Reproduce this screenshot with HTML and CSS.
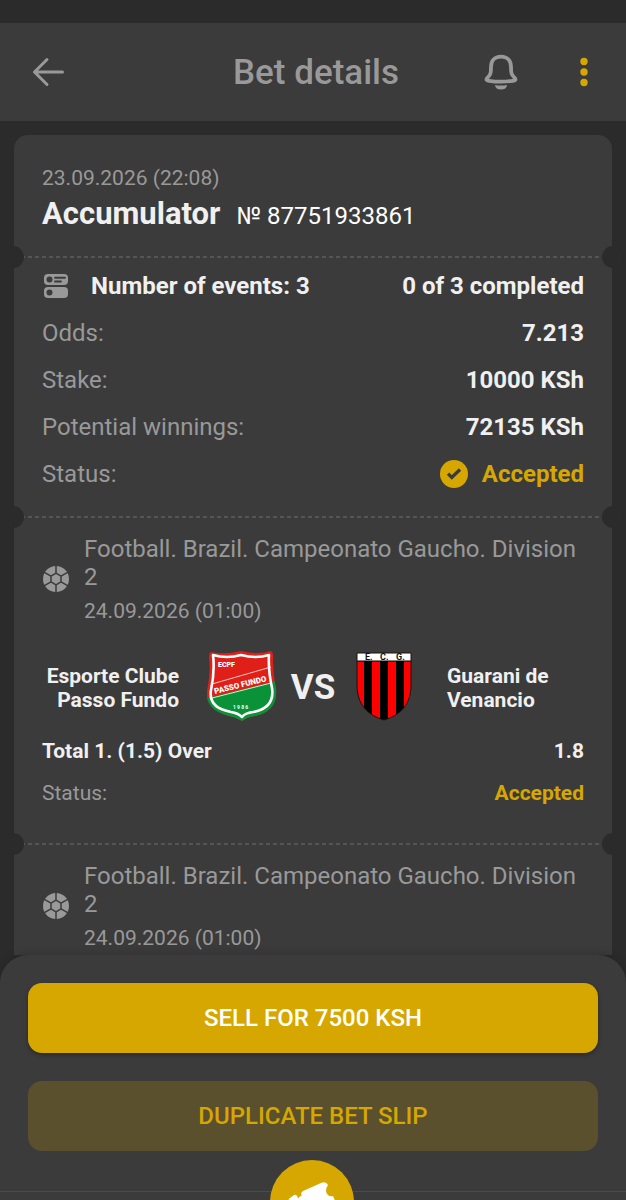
FILE: index.html
```
<!DOCTYPE html>
<html lang="en">
<head>
    <meta charset="UTF-8">
    <meta name="viewport" content="width=device-width, initial-scale=1.0">
    <title>Bet details</title>
    <link rel="stylesheet" href="styles.css">
</head>
<body>
    <!-- shared icons -->
    <svg class="sprite" aria-hidden="true">
        <symbol id="ball" viewBox="0 0 28 28">
            <circle cx="14" cy="14" r="13" fill="#999999"/>
            <path d="M14 8.2 L19 11.1 V16.9 L14 19.8 L9 16.9 V11.1 Z M14 8.2 V0 M14 19.8 V28 M19 11.1 L26.5 6.8 M19 16.9 L26.5 21.2 M9 11.1 L1.5 6.8 M9 16.9 L1.5 21.2" fill="none" stroke="#3b3b3b" stroke-width="1.5"/>
        </symbol>
    </svg>

    <header class="top-bar">
        <button class="icon-btn" aria-label="Back">
            <svg width="40" height="40" viewBox="0 0 40 40" fill="none" stroke="#999999" stroke-width="3" stroke-linecap="round" stroke-linejoin="round">
                <path d="M19 7.5 L6.5 20 L19 32.5 M6.5 20 H34.5"/>
            </svg>
        </button>
        <h1>Bet details</h1>
        <button class="icon-btn" aria-label="Notifications">
            <svg width="40" height="40" viewBox="0 0 40 40">
                <path d="M19 4.7 C12.5 4.7 9 9 9 15 C9 21 8.5 23 5.8 25.4 C3.4 27.8 4.6 28.5 7 28.8 C14.5 29.9 23.5 29.9 31 28.8 C33.4 28.5 34.6 27.8 32.2 25.4 C29.5 23 29 21 29 15 C29 9 25.5 4.7 19 4.7 Z" fill="none" stroke="#999999" stroke-width="3.8" stroke-linejoin="round"/>
                <path d="M13 33 Q19 34 25 33 Q24.5 37.5 19 37.5 Q13.5 37.5 13 33 Z" fill="#999999"/>
            </svg>
        </button>
        <button class="icon-btn" aria-label="More">
            <svg width="40" height="40" viewBox="0 0 40 40" fill="#d6a700">
                <circle cx="20" cy="9.5" r="3.7"/>
                <circle cx="20" cy="20" r="3.7"/>
                <circle cx="20" cy="30.5" r="3.7"/>
            </svg>
        </button>
    </header>

    <main>
        <div class="ticket">
            <section class="part bet-head">
                <p class="date">23.09.2026 (22:08)</p>
                <div class="bet-type">
                    <h2>Accumulator</h2>
                    <span class="bet-number">№ 87751933861</span>
                </div>
            </section>

            <section class="part summary">
                <div class="row">
                    <span class="events">
                        <svg width="28" height="28" viewBox="0 0 28 28">
                            <rect x="2" y="2" width="24" height="11" rx="4" fill="#999999"/>
                            <rect x="2" y="15" width="24" height="11" rx="4" fill="#999999"/>
                            <circle cx="7.5" cy="7.5" r="3" fill="#3b3b3b"/>
                            <circle cx="7.5" cy="20.5" r="3" fill="#3b3b3b"/>
                            <path d="M13 5.7 H23 M13 9.5 H19" stroke="#3b3b3b" stroke-width="1.9" stroke-linecap="round"/>
                        </svg>
                        <b>Number of events: 3</b>
                    </span>
                    <b>0 of 3 completed</b>
                </div>
                <div class="row"><span>Odds:</span><b>7.213</b></div>
                <div class="row"><span>Stake:</span><b>10000 KSh</b></div>
                <div class="row"><span>Potential winnings:</span><b>72135 KSh</b></div>
                <div class="row">
                    <span>Status:</span>
                    <b class="accepted">
                        <svg width="28" height="28" viewBox="0 0 28 28">
                            <circle cx="14" cy="14" r="14" fill="#d6a700"/>
                            <path d="M8 13.6 L11.8 17.4 L20 9.6" fill="none" stroke="#3b3b3b" stroke-width="3.4"/>
                        </svg>
                        Accepted
                    </b>
                </div>
            </section>

            <section class="part match">
                <div class="league">
                    <svg width="28" height="28"><use href="#ball"/></svg>
                    <div>
                        <p class="league-name">Football. Brazil. Campeonato Gaucho. Division 2</p>
                        <p class="date">24.09.2026 (01:00)</p>
                    </div>
                </div>
                <div class="teams">
                    <span class="team home">Esporte Clube Passo Fundo</span>
                    <svg width="70" height="70" viewBox="0 0 70 70">
                        <defs>
                            <clipPath id="shield">
                                <path d="M4 1 Q18 4 34 0 Q51 4 64 0 Q67 2 66 10 Q66 24 69 38 Q71 60 48 65 Q40 66 35 70 Q29 66 22 65 Q-2 59 0 40 Q4 20 2 6 Q2 2 4 1 Z"/>
                            </clipPath>
                        </defs>
                        <g clip-path="url(#shield)">
                            <rect width="70" height="70" fill="#e02018"/>
                            <path d="M0 47 L70 30 V70 H0 Z" fill="#0a9238"/>
                        </g>
                        <path d="M5 33 L64 16" stroke="#f4c4be"/>
                        <path d="M5 47 L64 32" stroke="#d4ecd9"/>
                        <path d="M6 4 Q20 8 34 4 Q49 8 62 4 Q61 19 65 37 Q68 57 46 61 Q38 62 35 66 Q31 62 24 61 Q1 57 4 39 Q8 20 6 4 Z" fill="none" stroke="#ffffff" stroke-width="2.6" stroke-linejoin="round"/>
                        <text x="11" y="16" font-size="7" font-weight="900" fill="#ffffff">ECPF</text>
                        <text x="8" y="43" font-size="8" font-weight="900" fill="#ffffff" transform="rotate(-14 8 43)">PASSO FUNDO</text>
                        <text x="26" y="58" font-size="5" font-weight="700" fill="#ffffff">1 9 8 6</text>
                    </svg>
                    <strong class="versus">VS</strong>
                    <svg width="70" height="70" viewBox="0 0 70 70">
                        <defs>
                            <clipPath id="ecg">
                                <path d="M8 2 H62 V34 C62 53 52 64 35 69 C18 64 8 53 8 34 Z"/>
                            </clipPath>
                        </defs>
                        <g clip-path="url(#ecg)">
                            <rect width="70" height="70" fill="#ff0000"/>
                            <path d="M15 10 H23 V70 H15 Z M31 10 H39 V70 H31 Z M47 10 H55 V70 H47 Z" fill="#000000"/>
                            <rect width="70" height="10" fill="#ffffff"/>
                            <path d="M8 10 H62" stroke="#000000"/>
                        </g>
                        <path d="M8 2 H62 V34 C62 53 52 64 35 69 C18 64 8 53 8 34 Z" fill="none" stroke="#1c1010"/>
                        <g font-size="9" font-weight="700" fill="#111111">
                            <text x="16" y="9">E.</text>
                            <text x="31" y="9">C.</text>
                            <text x="47" y="9">G.</text>
                        </g>
                    </svg>
                    <span class="team">Guarani de Venancio</span>
                </div>
                <div class="row small"><b>Total 1. (1.5) Over</b><b>1.8</b></div>
                <div class="row small"><span>Status:</span><b class="accepted">Accepted</b></div>
            </section>

            <section class="part match">
                <div class="league">
                    <svg width="28" height="28"><use href="#ball"/></svg>
                    <div>
                        <p class="league-name">Football. Brazil. Campeonato Gaucho. Division 2</p>
                        <p class="date">24.09.2026 (01:00)</p>
                    </div>
                </div>
            </section>
        </div>
    </main>

    <div class="actions">
        <button class="btn">SELL FOR 7500 KSH</button>
        <button class="btn btn-dim">DUPLICATE BET SLIP</button>
    </div>

    <nav class="bottom-bar">
        <a href="#" class="coupon" aria-label="Bet slip">
            <svg width="84" height="84" viewBox="0 0 84 84" fill="#ffffff">
                <path d="M32 36 Q30 33 33 31 L51 23 Q56 21 58 25 Q54 31 58 35 Q60 37 63 36 L70 52 L38 64 Z"/>
                <path d="M30 38 Q28 39 27 36 Q26 34 24 35 L20 38 Q18 39 19 41 L25 58 L36 64 Z"/>
                <path d="M29 37 L33 35 L36 50 L28 50 Z"/>
            </svg>
        </a>
    </nav>
</body>
</html>
```
FILE: styles.css
```
* {
    box-sizing: border-box;
}

body {
    display: flex;
    flex-direction: column;
    height: 100vh;
    margin: 0;
    padding-top: 23px; /* space for the phone status bar */
    overflow: hidden;
    background-color: #2b2b2b;
    color: #f0f0f0;
    font-family: Roboto, sans-serif;
    font-size: 24px;
    line-height: 28px;
}

h1, h2, p {
    margin: 0;
}

button {
    border: none;
    font-family: inherit;
    cursor: pointer;
}

.sprite {
    position: absolute;
    width: 0;
    height: 0;
}

svg {
    display: block;
    flex-shrink: 0;
}

/* Header */
.top-bar {
    display: grid;
    grid-template-columns: 40px 40px 1fr 40px 40px;
    column-gap: 42px;
    align-items: center;
    flex-shrink: 0;
    height: 98px;
    padding: 0 22px 0 28px;
    background-color: #3b3b3b;
}

.top-bar h1 {
    grid-column: 3;
    padding-top: 2px;
    color: #999999;
    font-size: 35px;
    font-weight: 500;
    line-height: 40px;
    text-align: center;
    white-space: nowrap;
}

.icon-btn {
    padding: 0;
    background: none;
}

/* Ticket */
main {
    flex: 1;
    min-height: 0;
    padding: 14px 14px 0;
    overflow: hidden;
}

.ticket {
    border-radius: 14px;
    background-color: #3b3b3b;
}

.part {
    position: relative;
}

/* dashed tear line */
.part + .part {
    background: repeating-linear-gradient(90deg, #555555 0 4px, transparent 4px 7px) top / 100% 2px no-repeat;
}

/* round cuts on both ends of the dashed line */
.part + .part::before,
.part + .part::after {
    content: "";
    position: absolute;
    top: -10px;
    width: 22px;
    height: 22px;
    border-radius: 50%;
    background-color: #2b2b2b;
}

.part + .part::before {
    left: -12px;
}

.part + .part::after {
    right: -12px;
}

.bet-head {
    padding: 31px 28px 22px;
}

.date {
    color: #999999;
    font-size: 21px;
    line-height: 24px;
}

.bet-type {
    display: flex;
    align-items: baseline;
    gap: 16px;
    margin-top: 4px;
}

.bet-number {
    color: #ffffff;
}

h2 {
    font-size: 31px;
    line-height: 40px;
}

.row {
    display: flex;
    justify-content: space-between;
    align-items: center;
    color: #999999;
}

.row b {
    color: #f0f0f0;
}

.row .accepted {
    display: flex;
    align-items: center;
    gap: 14px;
    color: #d6a700;
}

.summary {
    display: grid;
    row-gap: 19px;
    padding: 16px 28px 28px;
}

.events {
    display: flex;
    align-items: center;
    gap: 21px;
}

/* Match */
.match {
    padding: 19px 28px 36px;
}

.league {
    display: flex;
    align-items: center;
    gap: 14px;
    color: #999999;
}

.league-name {
    margin-bottom: 8px;
}

.teams {
    display: grid;
    grid-template-columns: 1fr 70px 44px 70px 1fr;
    column-gap: 14px;
    align-items: center;
    justify-items: center;
    margin: 28px 0 16px;
}

.team {
    justify-self: stretch;
    padding: 4px 0 0 14px;
    font-size: 21px;
    font-weight: 700;
    line-height: 24px;
}

.home {
    padding: 4px 14px 0 0;
    text-align: right;
}

.versus {
    padding-top: 4px;
    font-size: 35px;
    line-height: 40px;
}

.small {
    font-size: 21px;
}

.small + .small {
    margin-top: 14px;
}

/* Bottom panel */
.actions {
    display: grid;
    row-gap: 28px;
    flex-shrink: 0;
    padding: 28px 28px 40px;
    border-radius: 28px 28px 0 0;
    background-color: #3b3b3b;
    box-shadow: 0 -2px 8px rgba(0, 0, 0, 0.15);
}

.btn {
    height: 70px;
    border-radius: 14px;
    background-color: #d6a700;
    box-shadow: 0 2px 4px rgba(0, 0, 0, 0.3);
    color: #ffffff;
    font-size: 24px;
    font-weight: 500;
}

.btn-dim {
    background-color: #5a502d;
    box-shadow: none;
    color: #d6a700;
}

.bottom-bar {
    position: relative;
    flex-shrink: 0;
    height: 9px;
    border-top: 1px solid #4b4b4b;
    background-color: #3b3b3b;
}

/* round button that stands over the edge of the bar */
.coupon {
    position: absolute;
    top: -32px;
    left: calc(50% - 43px);
    border-radius: 50%;
    background-color: #d6a700;
}
```
